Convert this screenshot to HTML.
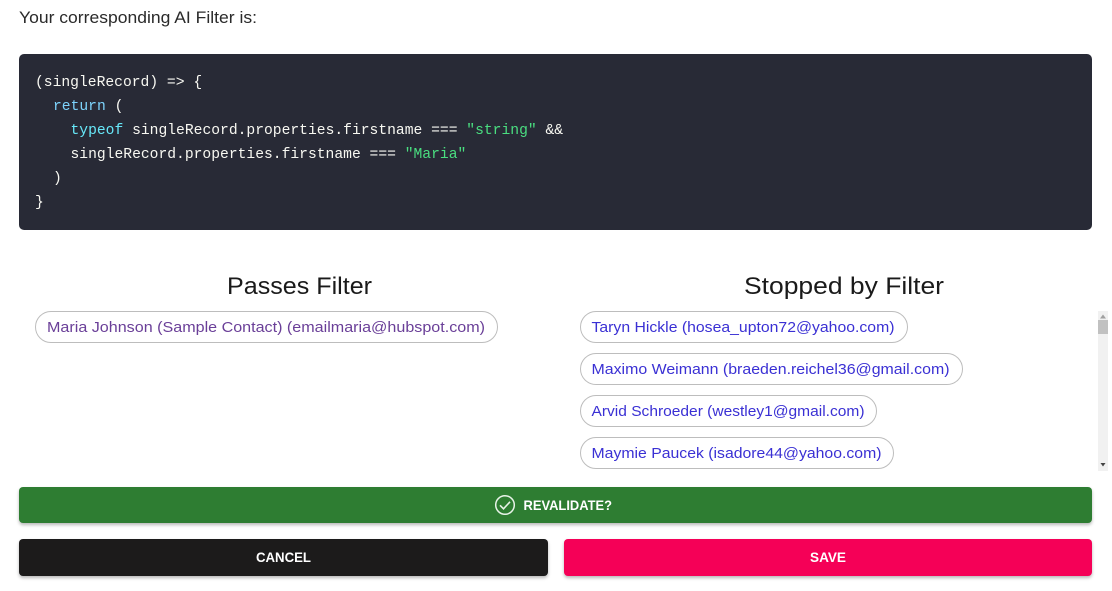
<!DOCTYPE html>
<html lang="en">
<head>
<meta charset="utf-8">
<title>AI Filter</title>
<style>
html,body{margin:0;padding:0;background:#fff;width:1112px;height:591px;overflow:hidden}
body{position:relative;font-family:"Liberation Sans",sans-serif}
.box{position:absolute;box-sizing:border-box}
.code{left:19px;top:54px;width:1073px;height:176px;background:#282a36;border-radius:5px}
.chip{border:1px solid #bdbdbd;border-radius:16px;height:32px;background:#fff}
.btn{border-radius:4px;box-shadow:0 2px 3px rgba(0,0,0,.28)}
.track{left:1098px;top:311px;width:10px;height:160px;background:#f1f1f1}
.thumb{left:1098px;top:320px;width:10px;height:14px;background:#c1c1c1}
svg.t{position:absolute;left:0;top:0}
.m{font-family:"Liberation Mono",monospace;font-size:14.67px;fill:#f8f8f2;white-space:pre;stroke:currentColor;stroke-width:0}
</style>
</head>
<body>
<div class="box code"></div>
<div class="box chip" style="left:35px;top:311px;width:463px"></div>
<div class="box chip" style="left:580px;top:311px;width:328px"></div>
<div class="box chip" style="left:580px;top:353px;width:383px"></div>
<div class="box chip" style="left:580px;top:395px;width:297px"></div>
<div class="box chip" style="left:580px;top:437px;width:314px"></div>
<div class="box track"></div>
<div class="box thumb"></div>
<div class="box btn" style="left:19px;top:487px;width:1073px;height:36px;background:#2e7d32"></div>
<div class="box btn" style="left:19px;top:539px;width:529px;height:37px;background:#1c1b1b"></div>
<div class="box btn" style="left:564px;top:539px;width:528px;height:37px;background:#f50057"></div>
<svg class="t" width="1112" height="591" viewBox="0 0 1112 591">
  <text x="19" y="23" font-size="16.5" fill="#2a2a2a" textLength="238" lengthAdjust="spacingAndGlyphs">Your corresponding AI Filter is:</text>

  <text class="m" x="35" y="86">(singleRecord) =&gt; {</text>
  <text class="m" x="53" y="110"><tspan fill="#7dd3fc">return</tspan> (</text>
  <text class="m" x="70.5" y="134"><tspan fill="#67e8f9">typeof</tspan> singleRecord.properties.firstname === <tspan fill="#4ade80">"string"</tspan> &amp;&amp;</text>
  <text class="m" x="70.5" y="158">singleRecord.properties.firstname === <tspan fill="#4ade80">"Maria"</tspan></text>
  <text class="m" x="53" y="182">)</text>
  <text class="m" x="35" y="206">}</text>

  <text x="227" y="294" font-size="24" fill="#1a1a1a" textLength="145" lengthAdjust="spacingAndGlyphs">Passes Filter</text>
  <text x="744" y="294" font-size="24" fill="#1a1a1a" textLength="200" lengthAdjust="spacingAndGlyphs">Stopped by Filter</text>

  <text x="47" y="332" font-size="15" fill="#6a3f98" textLength="438" lengthAdjust="spacingAndGlyphs">Maria Johnson (Sample Contact) (emailmaria@hubspot.com)</text>
  <text x="591.5" y="332" font-size="15" fill="#3a30d4" textLength="303" lengthAdjust="spacingAndGlyphs">Taryn Hickle (hosea_upton72@yahoo.com)</text>
  <text x="591.5" y="374" font-size="15" fill="#3a30d4" textLength="358" lengthAdjust="spacingAndGlyphs">Maximo Weimann (braeden.reichel36@gmail.com)</text>
  <text x="591.5" y="416" font-size="15" fill="#3a30d4" textLength="273" lengthAdjust="spacingAndGlyphs">Arvid Schroeder (westley1@gmail.com)</text>
  <text x="591.5" y="458" font-size="15" fill="#3a30d4" textLength="290" lengthAdjust="spacingAndGlyphs">Maymie Paucek (isadore44@yahoo.com)</text>

  <path d="M1103 314.500l3 4h-6z" fill="#a0a0a0"/>
  <path d="M1100.500 463h5l-2.500 3.500z" fill="#444"/>

  <circle cx="505" cy="505" r="9.300" fill="none" stroke="#e8f3e8" stroke-width="1.500"/>
  <path d="M500 505.300l3.500 3.500 6.500-7" fill="none" stroke="#e8f3e8" stroke-width="1.600"/>
  <text x="523.500" y="510" font-size="14" font-weight="700" fill="#fff" textLength="88.500" lengthAdjust="spacingAndGlyphs">REVALIDATE?</text>
  <text x="256" y="562" font-size="14" font-weight="700" fill="#fff" textLength="55" lengthAdjust="spacingAndGlyphs">CANCEL</text>
  <text x="810" y="562" font-size="14" font-weight="700" fill="#fff" textLength="36" lengthAdjust="spacingAndGlyphs">SAVE</text>
</svg>
</body>
</html>
